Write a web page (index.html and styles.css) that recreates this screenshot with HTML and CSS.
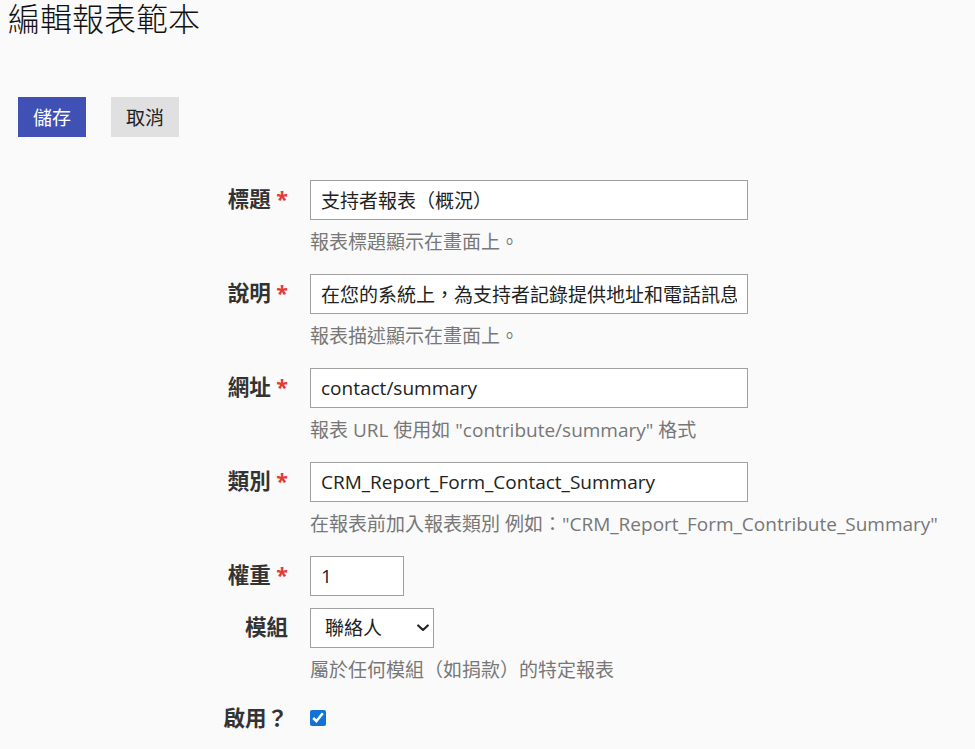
FILE: index.html
```html
<!DOCTYPE html>
<html lang="zh-Hant">
<head>
<meta charset="utf-8">
<title>編輯報表範本</title>
<link rel="stylesheet" href="styles.css">
</head>
<body>
<h1 class="page-title">編輯報表範本</h1>
<div class="actions">
  <button class="btn btn-primary" type="button">儲存</button>
  <button class="btn btn-secondary" type="button">取消</button>
</div>
<form class="form">
  <div class="row">
    <label class="label">標題 <span class="req">*</span></label>
    <div class="field">
      <input class="text wide" type="text" value="支持者報表（概況）">
      <div class="help">報表標題顯示在畫面上。</div>
    </div>
  </div>
  <div class="row">
    <label class="label">說明 <span class="req">*</span></label>
    <div class="field">
      <input class="text wide" type="text" value="在您的系統上，為支持者記錄提供地址和電話訊息">
      <div class="help">報表描述顯示在畫面上。</div>
    </div>
  </div>
  <div class="row">
    <label class="label">網址 <span class="req">*</span></label>
    <div class="field">
      <input class="text wide" type="text" value="contact/summary">
      <div class="help">報表 URL 使用如 "contribute/summary" 格式</div>
    </div>
  </div>
  <div class="row">
    <label class="label">類別 <span class="req">*</span></label>
    <div class="field">
      <input class="text wide" type="text" value="CRM_Report_Form_Contact_Summary">
      <div class="help">在報表前加入報表類別 例如："CRM_Report_Form_Contribute_Summary"</div>
    </div>
  </div>
  <div class="row">
    <label class="label">權重 <span class="req">*</span></label>
    <div class="field">
      <input class="text small" type="text" value="1">
    </div>
  </div>
  <div class="row">
    <label class="label">模組</label>
    <div class="field">
      <span class="select-wrap">
        <select class="select">
          <option>聯絡人</option>
        </select>
        <svg class="chevron" width="12" height="8" viewBox="0 0 12 8" aria-hidden="true"><path d="M1.2 1.4 L6 6 L10.8 1.4" fill="none" stroke="#222" stroke-width="2.1" stroke-linecap="round" stroke-linejoin="round"/></svg>
      </span>
      <div class="help">屬於任何模組（如捐款）的特定報表</div>
    </div>
  </div>
  <div class="row row-check">
    <label class="label">啟用？</label>
    <div class="field check-field">
      <input class="check" type="checkbox" checked>
    </div>
  </div>
</form>
</body>
</html>
```

FILE: styles.css
```css
html, body {
  background: #fafafa;
}
body {
  margin: 0 8px;
  font-family: "Open Sans", "Noto Sans CJK TC", sans-serif;
  color: #222;
  text-spacing-trim: space-all;
}
.page-title {
  margin: 0;
  font-size: 32px;
  line-height: 38px;
  font-weight: 300;
  color: #111;
}
.actions {
  display: flex;
  gap: 25px;
  margin: 59px 0 0 10px;
}
.btn {
  height: 40px;
  width: 68px;
  border: 0;
  border-radius: 0;
  font-family: inherit;
  font-size: 19px;
  padding: 0;
  text-spacing-trim: space-all;
}
.btn-primary {
  background: #3f51b5;
  color: #fff;
}
.btn-secondary {
  background: #e0e0e0;
  color: #222;
}
.form {
  margin-top: 43px;
}
.row {
  display: grid;
  grid-template-columns: 280px 1fr;
  column-gap: 22px;
  margin-bottom: 12px;
}
.label {
  text-align: right;
  font-size: 21.5px;
  font-weight: 700;
  line-height: 37px;
  color: #333;
}
.req {
  color: #e53935;
}
.text, .select {
  box-sizing: border-box;
  height: 40px;
  border: 1px solid #a0a0a0;
  background: #fff;
  font-family: inherit;
  font-size: 19px;
  color: #222;
  border-radius: 0;
  margin: 0;
  outline: none;
  text-spacing-trim: space-all;
}
.text {
  padding: 0 10px;
  display: block;
}
.wide {
  width: 438px;
}
.small {
  width: 94px;
}
.select-wrap {
  position: relative;
  display: block;
  width: 124px;
}
.select {
  width: 124px;
  padding: 0 24px 0 14px;
  display: block;
  appearance: none;
  -webkit-appearance: none;
}
.chevron {
  position: absolute;
  left: 107px;
  top: 16px;
  pointer-events: none;
}
.help {
  margin: 10px 0 8px;
  line-height: 24px;
  font-size: 19px;
  color: #777;
  white-space: nowrap;
}
.row-check .label {
  line-height: 32px;
}
.check-field {
  display: flex;
  align-items: center;
  height: 32px;
}
.check {
  width: 16px;
  height: 16px;
  margin: 0;
  accent-color: #1272d6;
}
```
